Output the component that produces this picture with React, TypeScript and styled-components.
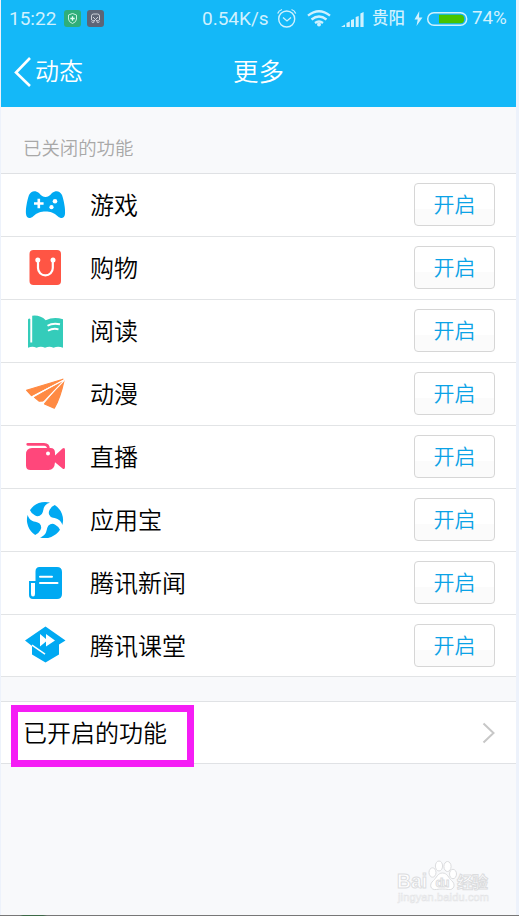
import React from "react";
import styled, { createGlobalStyle } from "styled-components";

const Global = createGlobalStyle`
  * { box-sizing: border-box; }
  html, body { margin: 0; padding: 0; background: #edf2fb; }
  body { font-family: Roboto, "Noto Sans CJK SC", sans-serif; font-weight: 350; }
`;

const Screen = styled.div`
  width: 519px;
  height: 916px;
  padding: 0 3px 0 1px;
  background: #edf2fb;
  display: flex;
  flex-direction: column;
  overflow: hidden;
`;

const Page = styled.main`
  flex: 1;
  display: flex;
  flex-direction: column;
  background: #f8f9fb;
`;

const Header = styled.header`
  height: 107px;
  background: #14b8f8;
  color: #fff;
`;

const StatusBar = styled.div`
  height: 37px;
  display: flex;
  align-items: center;
  padding-left: 8px;
  color: #d0f1fe;
  font-size: 19px;
  font-weight: 400;
  svg { flex: none; display: block; }
`;

const StatusText = styled.span<{ $width: number; $size?: number }>`
  flex: none;
  width: ${(p) => p.$width}px;
  font-size: ${(p) => p.$size ?? 19}px;
  line-height: 37px;
  white-space: nowrap;
`;

const Badges = styled.div`
  display: flex;
  gap: 6px;
  margin: 0 98px 0 6px;
`;

const City = styled.span`
  flex: none;
  width: 45px;
  padding-left: 5px;
  font-size: 16.5px;
  font-weight: 500;
  line-height: 37px;
`;

const NavBar = styled.nav`
  height: 70px;
  display: grid;
  grid-template-columns: 1fr auto 1fr;
  align-items: center;
`;

const Back = styled.div`
  display: flex;
  align-items: center;
  padding-left: 12px;
  gap: 3px;
  font-size: 24px;
  line-height: 68px;
  svg { display: block; }
`;

const Title = styled.h1`
  margin: 0;
  font-size: 25.5px;
  line-height: 68px;
  font-weight: 350;
`;

const SectionLabel = styled.div`
  height: 66px;
  padding: 28px 0 0 22px;
  color: #a8a8a8;
  font-size: 18.4px;
  line-height: 27px;
`;

const List = styled.ul`
  margin: 0;
  padding: 0;
  list-style: none;
  background: #fff;
  border-top: 1px solid #dfe1e4;
`;

const Row = styled.li`
  height: 63px;
  display: flex;
  align-items: center;
  padding: 0 21px 1px 22px;
  border-bottom: 1px solid #e2e4e6;
  &:last-child { height: 62px; padding-bottom: 0; }
  svg { flex: none; display: block; overflow: visible; }
`;

const Name = styled.span`
  flex: 1;
  padding: 2px 0 0 23px;
  color: #000;
  font-size: 24px;
  line-height: 36px;
`;

const EnableButton = styled.button`
  width: 81px;
  height: 43px;
  padding: 1px 0 0;
  border: 1px solid #d6d6d6;
  border-radius: 4px;
  background: linear-gradient(#fff 0 60%, #fbfbfb 62% 100%);
  color: #0ba2e6;
  font: inherit;
  font-size: 21px;
  line-height: 30px;
`;

const EnabledRow = styled.div`
  height: 63px;
  margin-top: 24px;
  display: flex;
  justify-content: space-between;
  padding-right: 20px;
  background: #fff;
  border: solid #e0e2e5;
  border-width: 1px 0;
  svg { display: block; margin-top: 19px; }
`;

const Highlight = styled.div`
  width: 183px;
  height: 62px;
  margin: 3px 0 0 10px;
  border: 7px solid #f51df5;
  padding-left: 5px;
  color: #000;
  font-size: 24px;
  line-height: 45px;
  white-space: nowrap;
`;

const Spacer = styled.div`
  flex: 1;
`;

const Watermark = styled.div`
  align-self: flex-end;
  width: 96px;
  height: 47px;
  margin: 0 26px 10px 0;
  svg { display: block; }
`;

const BottomEdge = styled.div`
  height: 1px;
  margin-left: -1px;
  margin-right: -3px;
  background: linear-gradient(90deg, #777 0 20px, #3d6847 23px 43px, #777 47px);
`;

const IconSvg = ({ shift = 0, children }: { shift?: number; children: React.ReactNode }) => (
  <svg width="44" height="44" viewBox="0 0 44 44">
    <g transform={`translate(0 ${shift})`}>{children}</g>
  </svg>
);

const GameIcon = () => (
  <IconSvg shift={1}>
    <path fill="#00a9f2" d="M6 11C8 7 12 6 16 9q3 4 6.500 4T29 9c4-3 8-2 10 2 2 6 3.500 14 3 19-.4 4.500-4 5-7 2.500-4-4-8-5-12.500-5S14 28.500 10 32.500C7 35 3.400 34.500 3 30 2.500 25 4 17 6 11Z" />
    <path stroke="#fff" strokeWidth="2.600" d="M11 19.500h9.600M15.800 14.700v9.600" />
    <circle cx="32" cy="17.300" r="2.300" fill="#fff" />
    <circle cx="28.500" cy="23.200" r="2.100" fill="#fff" />
  </IconSvg>
);

const ShopIcon = () => (
  <IconSvg shift={-1}>
    <rect x="6.500" y="5" width="31.500" height="35" rx="4" fill="#ff5544" />
    <path d="M15 15v8a7.400 7.400 0 0 0 14.800 0v-8" fill="none" stroke="#fff" strokeWidth="2.200" />
    <circle cx="14.800" cy="15" r="2.500" fill="#fff" />
    <circle cx="30" cy="15" r="2.500" fill="#fff" />
  </IconSvg>
);

const BookIcon = () => (
  <IconSvg shift={-0.5}>
    <path fill="#34ccba" d="M5 11q1-1.500 2.300-.6v23.500h1.900V7.200q8-1 13.500 4.500 8-4 17.300-1v28.600q-5-2-9.500 0-4-2-8.500 0-4-2-8.500 0-4-2-8.500 0Z" />
    <path stroke="#fff" strokeWidth="1.900" fill="none" d="M24.500 17.200q5-3 12.500-1.500M25 22.300q5-3 10.500-1.500" />
  </IconSvg>
);

const PlaneIcon = () => (
  <IconSvg shift={0.7}>
    <path fill="#ff8a43" stroke="#ff8a43" strokeWidth="1.200" strokeLinejoin="round" d="m41 8-19.500 23.200 9.800 4.300q6-10 9.700-27.500ZM39 9 11.500 24.700l4.800 3.800 4.500-.2ZM40 6.500 3.500 17.500l5 5.500Z" />
    <path stroke="#fff" strokeWidth="1.100" d="M41.500 7 8.500 24.400M41.500 7.500 19.500 30.500" />
  </IconSvg>
);

const LiveIcon = () => (
  <IconSvg>
    <path d="M4.700 9.300H21q4.500 0 4.500 5" fill="none" stroke="#ff477b" strokeWidth="2.700" strokeLinecap="round" />
    <path fill="#ff477b" d="M9 13h18.500q4.500 0 4.500 5v2.500l7.500-7q2.500-1.500 2.500 1.500v17q0 3-2.500 1.500L32 27.200q-.5 7.800-6.500 7.800H7.500Q3 35 3 30.500v-11Q3 13 9 13Z" />
    <circle cx="25" cy="18.400" r="2" fill="#fff" />
  </IconSvg>
);

const AppIcon = () => (
  <IconSvg>
    <g fill="#00a9f2">
      {[0, 90, 180, 270].map((angle) => (
        <path
          key={angle}
          transform={`rotate(${angle} 22 22)`}
          d="M7 12.200A18 18 0 0 1 27 4.600C21.500 6.500 20.800 9.500 19.800 14A5.200 5.200 0 0 1 11.800 17.300Q8.300 15.500 7 12.200Z"
        />
      ))}
    </g>
  </IconSvg>
);

const NewsIcon = () => (
  <IconSvg shift={1.5}>
    <path fill="#00a9f2" d="M16.500 4.500H34q5 0 5 5v22q0 5-5 5H10q-4 0-4-4V18.500h6.500V9q0-4.500 4-4.500Z" />
    <path fill="#fff" d="M8 20.500h4v11q0 2.500-2 2.500t-2-2.500Z" />
    <path stroke="#fff" strokeWidth="2" strokeLinecap="round" d="M17 14.300h12M17 20.500h17.500" />
  </IconSvg>
);

const ClassIcon = () => (
  <IconSvg shift={-0.6}>
    <path fill="#00a9f2" d="M22.500 3 42.500 17 36 21v10L22.500 39 9 31v-8.500L2 17Z" />
    <path stroke="#fff" strokeWidth="1.500" d="m9 21.800 13 9" />
    <path fill="#fff" d="m17 10.500 6 5v-5l9 6.500-9 6v-5l-6 5Z" />
  </IconSvg>
);

const features = [
  { name: "游戏", Icon: GameIcon },
  { name: "购物", Icon: ShopIcon },
  { name: "阅读", Icon: BookIcon },
  { name: "动漫", Icon: PlaneIcon },
  { name: "直播", Icon: LiveIcon },
  { name: "应用宝", Icon: AppIcon },
  { name: "腾讯新闻", Icon: NewsIcon },
  { name: "腾讯课堂", Icon: ClassIcon },
];

const StatusBadges = () => (
  <Badges>
    <svg width="17" height="17" viewBox="0 0 17 17">
      <rect width="17" height="17" rx="3" fill="#2fae79" />
      <path d="m8.500 3.500 4 1.500v4q0 3-4 4.500-4-1.500-4-4.500V5Z" fill="none" stroke="#c7f3e2" />
      <path d="M8.500 6.300v4.400M6.300 8.500h4.400" stroke="#e4fff3" strokeWidth="1.300" />
    </svg>
    <svg width="17" height="17" viewBox="0 0 17 17">
      <rect width="17" height="17" rx="3" fill="#5d6577" />
      <path d="M4.500 10V6q0-2 2-2h4q2 0 2 2v4M6 7l4.500 4.500M11 7l-4.500 4.500" fill="none" stroke="#cdd1da" />
      <circle cx="6" cy="11.500" r="1.200" fill="none" stroke="#cdd1da" strokeWidth=".8" />
      <circle cx="11" cy="11.500" r="1.200" fill="none" stroke="#cdd1da" strokeWidth=".8" />
    </svg>
  </Badges>
);

const StatusIcons = () => (
  <svg width="98" height="24" viewBox="0 0 98 24">
    <g fill="none" stroke="#d0f1fe">
      <circle cx="17.700" cy="12" r="8" strokeWidth="1.400" />
      <path d="m14 10.500 4 3.500 4-3.500M8.700 6.500q1-3 4.300-4M22.500 2.500q3.200 1 4.200 4" strokeWidth="1.300" />
      <path d="M39 8.700q11-9 22 0M42.500 12.500q7.500-6 15 0M46 16q4-3 8 0" strokeWidth="2.300" />
    </g>
    <path fill="#d0f1fe" d="M50 15.500a2 2 0 1 1 0 4 2 2 0 0 1 0-4ZM72 20l4-2.500V20ZM77.500 16l3.300-1.500V20h-3.300ZM82 13l3-1v8h-3ZM86.700 10l3-1v11h-3ZM91.400 6.500 94.600 5v15h-3.200Z" />
  </svg>
);

const Battery = () => (
  <svg width="60" height="24" viewBox="0 0 60 24">
    <path fill="#d0f1fe" d="M7.300 4 2.500 12.500h3.200L4.500 19l6-8.500H7Z" />
    <rect x="15.700" y="5.700" width="39" height="12.600" rx="6.300" fill="none" stroke="#d0f1fe" strokeWidth="1.500" />
    <path fill="#47c400" d="M27 7.700h21.500q3.700 0 3.700 4.300t-3.700 4.300H27Z" />
  </svg>
);

export default function App() {
  return (
    <>
      <Global />
      <Screen>
        <Page>
          <Header>
            <StatusBar>
              <StatusText $width={49}>15:22</StatusText>
              <StatusBadges />
              <StatusText $width={67}>0.54K/s</StatusText>
              <StatusIcons />
              <City>贵阳</City>
              <Battery />
              <StatusText $width={40} $size={18.8}>74%</StatusText>
            </StatusBar>
            <NavBar>
              <Back>
                <svg width="19" height="32" viewBox="0 0 19 32">
                  <path d="M17 2 3 16.500 17 30" fill="none" stroke="#fff" strokeWidth="2.600" />
                </svg>
                动态
              </Back>
              <Title>更多</Title>
            </NavBar>
          </Header>
          <SectionLabel>已关闭的功能</SectionLabel>
          <List>
            {features.map(({ name, Icon }) => (
              <Row key={name}>
                <Icon />
                <Name>{name}</Name>
                <EnableButton>开启</EnableButton>
              </Row>
            ))}
          </List>
          <EnabledRow>
            <Highlight>已开启的功能</Highlight>
            <svg width="15" height="24" viewBox="0 0 15 24">
              <path d="m2.500 2.500 10 9.500-10 9.500" fill="none" stroke="#c7c7c7" strokeWidth="2" />
            </svg>
          </EnabledRow>
          <Spacer />
          <Watermark>
            <svg width="96" height="47" viewBox="0 0 96 47" fontFamily="Liberation Sans, Noto Sans CJK SC, sans-serif">
              <g fill="#fff" stroke="#dcdddf" strokeWidth="1">
                <text x="3" y="30" fontSize="20" fontWeight="700" textLength="30" lengthAdjust="spacingAndGlyphs">Bai</text>
                <text x="63" y="30" fontSize="16" fontWeight="700" textLength="31">经验</text>
                <ellipse cx="38.500" cy="14.500" rx="3.500" ry="4.700" />
                <ellipse cx="45" cy="8" rx="3.600" ry="5" />
                <ellipse cx="53.500" cy="8.500" rx="3.600" ry="5" />
                <ellipse cx="59" cy="16" rx="3.500" ry="4.700" />
                <path d="M48.500 15c5 0 6 5 9 7.500 5 4 2 10-3 9-4-.7-8-.7-12 0-6 1-8-5-3-9 3-2.500 4-7.500 9-7.500Z" />
                <text x="41.500" y="29" fontSize="13" fontWeight="700" textLength="14">du</text>
              </g>
              <text x="4" y="43" fontSize="11" fill="#fff" stroke="#e3e4e6" strokeWidth=".6" textLength="91">jingyan.baidu.com</text>
            </svg>
          </Watermark>
          <BottomEdge />
        </Page>
      </Screen>
    </>
  );
}
